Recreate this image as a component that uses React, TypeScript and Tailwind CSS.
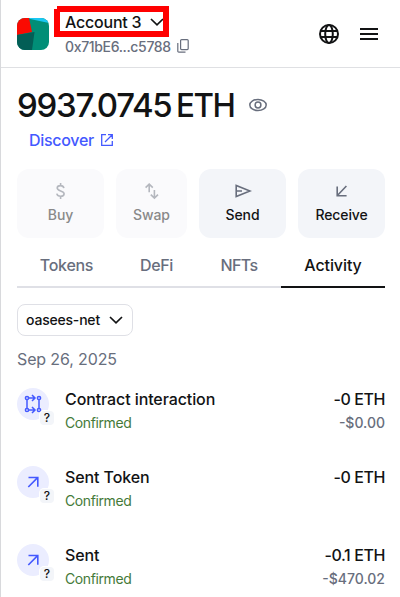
import type { ReactNode } from "react";

function Chevron({ className }: { className: string }) {
  return (
    <svg viewBox="0 0 14 8" className={className} fill="none" stroke="currentColor" strokeWidth="1.7">
      <path d="M1 1l6 5.8L13 1" />
    </svg>
  );
}

function Avatar() {
  return (
    <svg viewBox="0 0 32 32" className="mt-[18px] h-8 w-8 shrink-0 rounded-lg">
      <rect width="32" height="32" fill="#018e77" />
      <path d="M12 0h20v5L13 1z" fill="#19c7f2" />
      <path d="M0 0h12l3 14L0 17z" fill="#fa0a02" />
      <path d="M0 17l17.5-3-2.5 18H0z" fill="#035e56" />
    </svg>
  );
}

function Header() {
  return (
    <header className="relative flex h-[68px] border-b border-[#dfe0e3] pl-4 pr-[22px]">
      <Avatar />
      <div className="ml-4 pt-2.5">
        <div className="flex h-6 items-center whitespace-nowrap text-[16px] font-medium tracking-[-0.22px] text-[#121314]">
          <span className="w-[85px]">Account 3</span>
          <Chevron className="h-2 w-[14px]" />
        </div>
        <div className="flex h-6 items-center text-[14px] font-medium text-[#686e7d]">
          <span className="w-[112px] shrink-0 tracking-[-0.35px]">0x71bE6...c5788</span>
          <svg viewBox="0 0 12 14" className="h-[14px] w-3 shrink-0" fill="none" stroke="currentColor" strokeWidth="1.2">
            <rect x="3.6" y=".6" width="7.6" height="10" rx="1" />
            <path d="M.8 4v8.2a1 1 0 0 0 1 1h6.7" />
          </svg>
        </div>
      </div>
      <div className="absolute left-[53px] top-1.5 h-[31px] w-[115px] border-[6px] border-[#ff0000]" />
      <div className="absolute left-[53px] top-1.5 h-[3px] w-[3px] bg-white" />
      <div className="ml-auto flex h-[68px] items-center gap-[21px] text-[#121314]">
        <svg viewBox="0 0 20 20" className="h-5 w-5" fill="none" stroke="currentColor" strokeWidth="2">
          <circle cx="10" cy="10" r="9" />
          <ellipse cx="10" cy="10" rx="3.8" ry="9" />
          <path d="M1.5 7h17M1.5 13h17" />
        </svg>
        <svg viewBox="0 0 18 12" className="h-3 w-[18px]" fill="currentColor">
          <path d="M0 0h18v2H0zM0 5h18v2H0zM0 10h18v2H0z" />
        </svg>
      </div>
    </header>
  );
}

function Action({ label, disabled, children }: { label: string; disabled?: boolean; children: ReactNode }) {
  return (
    <button
      className={`flex h-[69px] flex-col items-center rounded-xl text-[14px] font-medium pt-[13px] ${disabled ? "bg-[#fafafc] text-[#898989]" : "bg-[#f3f5f9] text-[#121314]"}`}
    >
      <svg
        viewBox="0 0 18 18"
        className={`h-[18px] w-[18px] ${disabled ? "text-[#b4b7be]" : "text-[#686e7d]"}`}
        fill="none"
        stroke="currentColor"
        strokeWidth="1.6"
      >
        {children}
      </svg>
      <span className="mt-[5px] leading-5 tracking-[-0.1px]">{label}</span>
    </button>
  );
}

function Actions() {
  return (
    <div className="mt-[17px] grid grid-cols-[87px_71px_87px_87px] gap-3">
      <Action label="Buy" disabled>
        <path d="M11.9 6.2C11.5 4.4 10.2 3.6 8.6 3.6 6.6 3.6 5.2 4.5 5.2 6.1c0 3.6 6.9 2 6.9 5.6 0 1.7-1.5 2.6-3.5 2.6-2 0-3.4-.9-3.8-2.7M8.6 1v2.6M8.6 14.3V17" />
      </Action>
      <Action label="Swap" disabled>
        <path d="M6.2 10.2V2.4M2.6 5.6l3.6-3.5 3.6 3.5M11.4 8V16M7.8 12.6l3.6 3.5 3.6-3.5" />
      </Action>
      <Action label="Send">
        <path d="M2.2 3.4v11.2L16 9zM2.5 9H8" />
      </Action>
      <Action label="Receive">
        <path d="M13.4 4L4.6 13.2M4.2 4.5v9.2h9.4" />
      </Action>
    </div>
  );
}

function Tabs() {
  return (
    <nav className="mt-2.5 flex h-10 text-[16px] font-medium text-[#686e7d]">
      <span className="flex w-[99px] justify-center border-b-2 border-[#dfe0e6] pt-[5px] tracking-[-0.3px]">Tokens</span>
      <span className="flex w-[81px] justify-center border-b-2 border-[#dfe0e6] pt-[5px] tracking-[-0.4px]">DeFi</span>
      <span className="flex w-[84px] justify-center border-b-2 border-[#dfe0e6] pt-[5px] tracking-[-0.6px]">NFTs</span>
      <span className="flex w-[104px] justify-center border-b-2 border-[#121314] pt-[5px] tracking-[-0.1px] text-[#121314]">Activity</span>
    </nav>
  );
}

type Tx = { title: string; amount: string; fiat?: string; contract?: boolean };

const transactions: Tx[] = [
  { title: "Contract interaction", amount: "-0 ETH", fiat: "-$0.00", contract: true },
  { title: "Sent Token", amount: "-0 ETH" },
  { title: "Sent", amount: "-0.1 ETH", fiat: "-$470.02" },
];

function TxRow({ title, amount, fiat, contract }: Tx) {
  return (
    <li className="flex h-[78px]">
      <div className="relative mt-px h-8 w-8 rounded-full bg-[#ebedff] text-[#4459ff]">
        {contract ? (
          <svg viewBox="0 0 32 32" className="h-8 w-8" fill="none" stroke="currentColor" strokeWidth="1.5">
            <circle cx="10" cy="10" r="1.6" />
            <circle cx="22" cy="10" r="1.6" />
            <circle cx="10" cy="22" r="1.6" />
            <circle cx="22" cy="22" r="1.6" />
            <path d="M10 12v8M22 12v8M12 10h5.5M12 22h5.5M15 7l3 3-3 3M15 19l3 3-3 3" />
          </svg>
        ) : (
          <svg viewBox="0 0 32 32" className="h-8 w-8" fill="none" stroke="currentColor" strokeWidth="1.6">
            <path d="M11.3 21l9.3-9.4M11.5 11.5h9.3v9.3" />
          </svg>
        )}
        <span className="absolute left-[23px] top-[23px] flex h-[14px] w-[14px] items-center justify-center rounded-[4px] bg-[#f3f5f9] text-[12px] font-medium leading-[14px] text-[#121314] ring-1 ring-white">
          ?
        </span>
      </div>
      <div className="ml-4 font-medium">
        <div className="text-[16px] leading-6 tracking-[-0.1px] text-[#121314]">{title}</div>
        <div className="text-[14px] font-normal leading-6 tracking-[-0.4px] text-[#457a39]">Confirmed</div>
      </div>
      <div className="ml-auto text-right">
        <div className="text-[16px] font-medium leading-6 tracking-[-0.4px] text-[#121314]">{amount}</div>
        {fiat && <div className="text-[14px] font-medium leading-6 text-[#686e7d]">{fiat}</div>}
      </div>
    </li>
  );
}

export default function App() {
  return (
    <div className="h-[597px] w-[400px] overflow-hidden border-l border-[#d8d9dc] bg-white font-['Inter',sans-serif]">
      <Header />
      <main className="pl-4 pr-[15px]">
        <div className="mt-[17px] flex h-10 items-center">
          <div className="flex w-[232px] whitespace-nowrap text-[33px] font-medium leading-10 text-[#121314]">
            <span className="w-[159px] tracking-[-1.25px]">9937.0745</span>
            <span className="origin-left scale-x-[0.95] tracking-[-1.5px]">ETH</span>
          </div>
          <svg viewBox="0 0 18 14" className="h-[14px] w-[18px] text-[#686e7d]" fill="none" stroke="currentColor" strokeWidth="1.5">
            <ellipse cx="9" cy="7" rx="8.2" ry="5.6" />
            <circle cx="9" cy="7" r="2.9" />
          </svg>
        </div>
        <a className="ml-3 mt-[3px] flex h-6 items-center text-[16px] font-medium text-[#4459ff]">
          <span className="w-[72px] tracking-[-0.3px]">Discover</span>
          <svg viewBox="0 0 12 12" className="h-3 w-3" fill="none" stroke="currentColor" strokeWidth="1.3">
            <path d="M5 .7H.7v10.6h10.6V7M7 .7h4.3V5M11 1L4 8" />
          </svg>
        </a>
        <Actions />
        <Tabs />
        <button className="mt-4 flex h-8 w-[116px] items-center rounded-lg border border-[#dfe0e6] pb-px pl-2 text-[14px] font-medium text-[#121314]">
          <span className="w-[83px] text-left tracking-[-0.2px]">oasees-net</span>
          <Chevron className="h-2 w-[14px]" />
        </button>
        <div className="mt-[11px] text-[16px] leading-6 tracking-[-0.13px] text-[#686e7d]">Sep 26, 2025</div>
        <ul className="mt-4">
          {transactions.map((tx) => (
            <TxRow key={tx.title} {...tx} />
          ))}
        </ul>
      </main>
    </div>
  );
}
